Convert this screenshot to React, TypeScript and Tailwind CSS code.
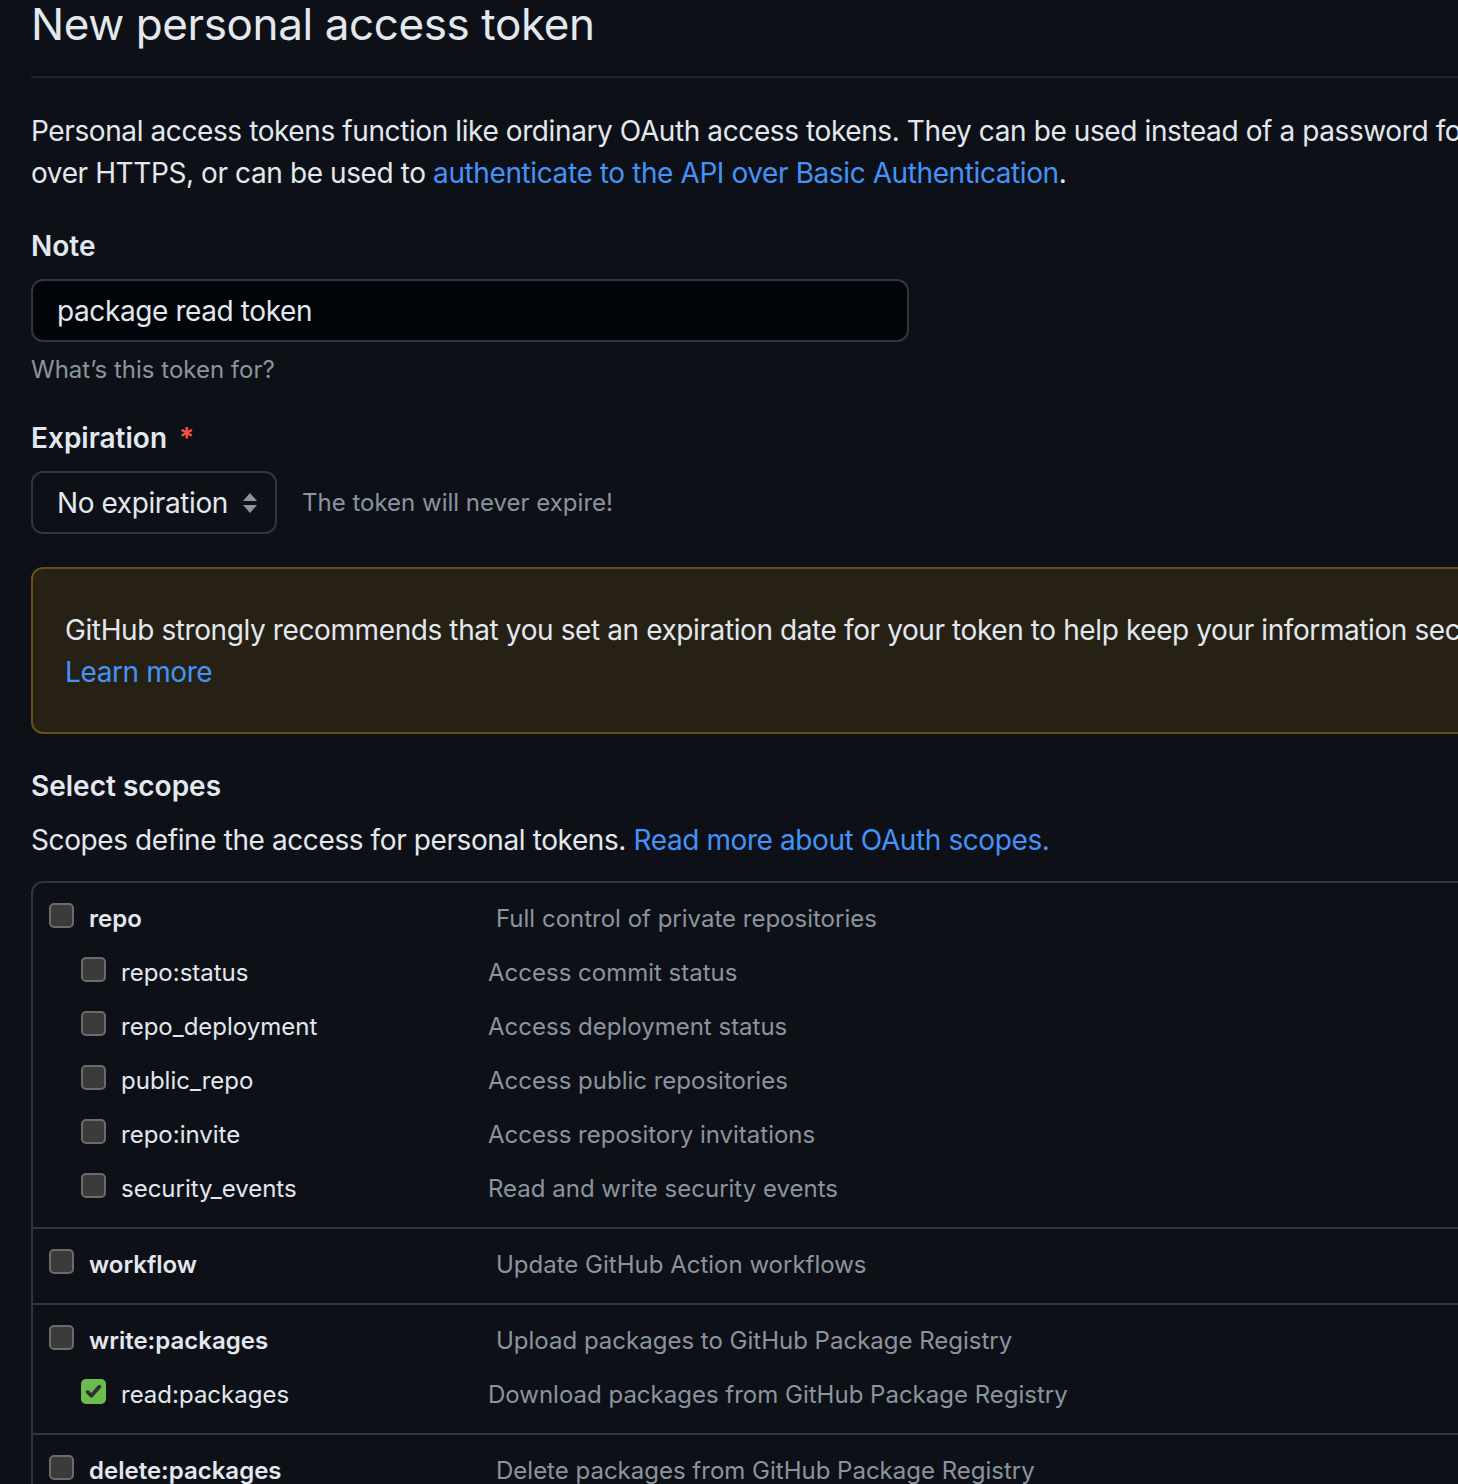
import React from 'react';

type Scope = {
  name: string;
  desc: string;
  checked?: boolean;
  children?: { name: string; desc: string; checked?: boolean }[];
};

const scopes: Scope[] = [
  {
    name: 'repo',
    desc: 'Full control of private repositories',
    children: [
      { name: 'repo:status', desc: 'Access commit status' },
      { name: 'repo_deployment', desc: 'Access deployment status' },
      { name: 'public_repo', desc: 'Access public repositories' },
      { name: 'repo:invite', desc: 'Access repository invitations' },
      { name: 'security_events', desc: 'Read and write security events' },
    ],
  },
  { name: 'workflow', desc: 'Update GitHub Action workflows' },
  {
    name: 'write:packages',
    desc: 'Upload packages to GitHub Package Registry',
    children: [{ name: 'read:packages', desc: 'Download packages from GitHub Package Registry', checked: true }],
  },
  { name: 'delete:packages', desc: 'Delete packages from GitHub Package Registry' },
];

const Checkbox = ({ checked }: { checked?: boolean }) =>
  checked ? (
    <span className="w-[25px] h-[25px] mb-[7px] rounded-[5px] bg-[#6cbb51] flex items-center justify-center shrink-0">
      <svg width="19" height="19" viewBox="0 0 18 18">
        <path d="M3.5 9.5 L7 13 L14.5 4.5" fill="none" stroke="#2f2f2f" strokeWidth="3.6" strokeLinecap="round" strokeLinejoin="round" />
      </svg>
    </span>
  ) : (
    <span className="w-[25px] h-[25px] mb-[7px] rounded-[5px] bg-[#3b3b3b] border-2 border-[#6b6b6b] shrink-0" />
  );

export default function App() {
  return (
    <div
      className="w-[1458px] h-[1484px] overflow-hidden bg-[#0d1117] text-[#e2e8ee]"
      style={{ fontFamily: 'Inter, "Noto Sans", sans-serif' }}
    >
      <div className="w-[1700px] pl-[31px] -mt-[12px]">
        <h1 className="text-[44px] leading-[72px] font-normal tracking-[-0.4px]">New personal access token</h1>
        <div className="h-[2px] bg-[#21262d] mt-[16px]" />

        <p className="mt-[32px] text-[28px] leading-[42px] tracking-[-0.4px] whitespace-nowrap">
          Personal access tokens function like ordinary OAuth access tokens. They can be used instead of a password for Git
          <br />
          over HTTPS, or can be used to <span className="text-[#4493f8]">authenticate to the API over Basic Authentication</span>.
        </p>

        <div className="mt-[31px] text-[28px] leading-[42px] font-semibold">Note</div>
        <div className="mt-[12px] w-[878px] h-[63px] rounded-[12px] border-2 border-[#30363d] bg-[#010409] flex items-center px-[24px] text-[28px] tracking-[-0.4px]">
          package read token
        </div>
        <div className="mt-[12px] text-[24px] leading-[32px] text-[#8b949e]">What’s this token for?</div>

        <div className="mt-[31px] text-[28px] leading-[42px] font-semibold flex">
          Expiration <span className="ml-[12px] text-[#f85149]">*</span>
        </div>
        <div className="mt-[12px] flex items-center">
          <div className="w-[246px] h-[63px] rounded-[12px] border-2 border-[#30363d] flex items-center pl-[24px] pr-[16px] justify-between text-[28px] tracking-[-0.4px]">
            <span>No expiration</span>
            <svg width="18" height="24" viewBox="0 0 18 24">
              <path d="M9 2 L16 10 L2 10 Z" fill="#8b949e" />
              <path d="M9 22 L16 14 L2 14 Z" fill="#8b949e" />
            </svg>
          </div>
          <span className="ml-[25px] text-[24px] text-[#8b949e]">The token will never expire!</span>
        </div>

        <div className="mt-[33px] h-[167px] rounded-[12px] border-2 border-[#6a4d17] bg-[#272115] px-[32px] flex flex-col justify-center text-[28px] leading-[42px] tracking-[-0.4px] whitespace-nowrap">
          <span>GitHub strongly recommends that you set an expiration date for your token to help keep your information secure.</span>
          <span className="text-[#4493f8]">Learn more</span>
        </div>

        <div className="mt-[31px] text-[28px] leading-[42px] font-semibold">Select scopes</div>
        <div className="mt-[12px] text-[28px] leading-[42px] tracking-[-0.4px]">
          Scopes define the access for personal tokens. <span className="text-[#4493f8]">Read more about OAuth scopes.</span>
        </div>

        <div className="mt-[20px] rounded-[12px] border-2 border-[#30363d]">
          {scopes.map((s, i) => (
            <div key={s.name} className={`${i > 0 ? 'border-t-2 border-[#30363d]' : ''} pt-[14px] pb-[16px]`}>
              <div className="flex items-center h-[44px] pl-[16px]">
                <Checkbox checked={s.checked} />
                <span className="ml-[15px] w-[407px] text-[24px] font-semibold">{s.name}</span>
                <span className="text-[24px] text-[#8b949e]">{s.desc}</span>
              </div>
              {s.children?.map((c) => (
                <div key={c.name} className="flex items-center h-[44px] pl-[48px] mt-[10px]">
                  <Checkbox checked={c.checked} />
                  <span className="ml-[15px] w-[367px] text-[24px]">{c.name}</span>
                  <span className="text-[24px] text-[#8b949e]">{c.desc}</span>
                </div>
              ))}
            </div>
          ))}
        </div>
      </div>
    </div>
  );
}
